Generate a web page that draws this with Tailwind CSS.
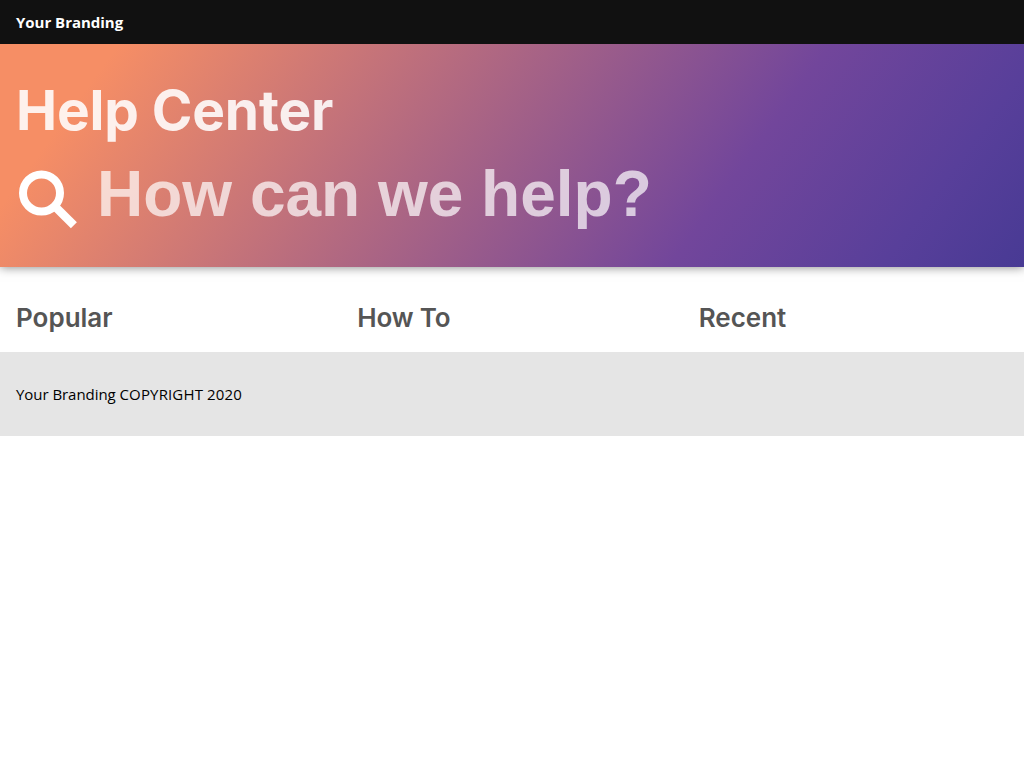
<!DOCTYPE html>
<html lang="en">
<head>
<meta charset="utf-8">
<title>Help Center</title>
<script src="https://cdn.jsdelivr.net/npm/@tailwindcss/browser@4"></script>
</head>
<body class="bg-white font-['Open_Sans','Noto_Sans',sans-serif] text-base text-black">
<header class="relative z-10 flex h-11 items-center bg-[#111] px-4">
  <span class="text-[15px] font-bold tracking-[-0.02px] text-white">Your Branding</span>
</header>
<section class="relative h-[223px] bg-[linear-gradient(126deg,#f68e65_10%,#72469b_70%,#583f9a_88%,#483a94_100%)] px-4 pt-[33px] shadow-[0_0_10px_rgba(0,0,0,0.5)]">
  <h1 class="font-['Inter',sans-serif] text-[55px] leading-[67px] font-bold tracking-[-0.15px] text-white/88">Help Center</h1>
  <div class="flex items-start pt-[10px]">
    <svg class="mt-[14px] size-16 shrink-0" viewBox="0 0 64 64" fill="none" stroke="#fff" stroke-width="8" aria-hidden="true"><circle cx="25.5" cy="25" r="18.5"/><path d="M38 37.5 57.9 57.2" stroke-width="8.5"/></svg>
    <input class="ml-[17px] h-[80px] flex-1 font-['Liberation_Sans',sans-serif] text-[64px] font-bold text-white outline-none placeholder:text-white/70" type="text" placeholder="How can we help?">
  </div>
</section>
<main class="grid h-[85px] grid-cols-3 font-['Inter',sans-serif] text-[26px] leading-8 font-semibold text-[#555]">
  <h2 class="pt-[35px] pl-4">Popular</h2>
  <h2 class="pt-[35px] pl-4 tracking-[-0.2px]">How To</h2>
  <h2 class="pt-[35px] pl-4">Recent</h2>
</main>
<footer class="flex h-[84px] items-center bg-[#e5e5e5] px-4">
  <p class="text-[15px] tracking-[0.15px]"><span class="tracking-[-0.05px]">Your Branding </span>COPYRIGHT 2020</p>
</footer>
</body>
</html>
